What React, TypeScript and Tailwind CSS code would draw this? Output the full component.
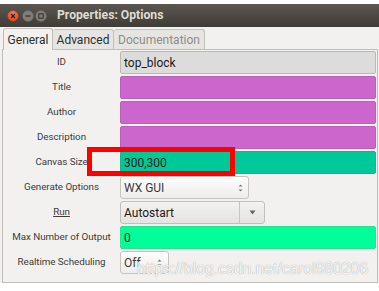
import React from "react";

function Spin() {
  return (
    <svg width="7" height="10" viewBox="0 0 7 10">
      <path d="M1.5 3.5 L3.5 1.5 L5.5 3.5 Z" fill="#777" />
      <path d="M1.5 6.5 L3.5 8.5 L5.5 6.5 Z" fill="#777" />
    </svg>
  );
}

const label = "flex items-center justify-center text-[9.8px] text-[#3c3c3c] tracking-[-0.05px]";
const fieldText = "text-[12px] text-[#1b1b1b] pl-[3px] flex items-center";

export default function App() {
  return (
    <div className="w-[379px] h-[291px] bg-white relative overflow-hidden font-['Roboto',sans-serif]">
      <div className="mt-[4px] h-[23px] bg-gradient-to-b from-[#5b5750] to-[#3e3c38] flex items-center pl-[7px]">
        <svg width="12" height="12" viewBox="0 0 12 12" className="mr-[3px]">
          <defs>
            <radialGradient id="cl" cx="0.5" cy="0.35" r="0.6">
              <stop offset="0" stopColor="#f5845a" />
              <stop offset="1" stopColor="#d9471d" />
            </radialGradient>
          </defs>
          <circle cx="6" cy="6" r="5.7" fill="url(#cl)" stroke="#5a2a1a" strokeWidth="0.4" />
          <path d="M4 4 L8 8 M8 4 L4 8" stroke="#3a1a10" strokeWidth="1.3" />
        </svg>
        <svg width="12" height="12" viewBox="0 0 12 12" className="mr-[1px]">
          <circle cx="6" cy="6" r="5.7" fill="#807d77" stroke="#4a4843" strokeWidth="0.4" />
          <path d="M3.5 6 L8.5 6" stroke="#3c3a36" strokeWidth="1.4" />
        </svg>
        <svg width="12" height="12" viewBox="0 0 12 12">
          <circle cx="6" cy="6" r="5.7" fill="#807d77" stroke="#4a4843" strokeWidth="0.4" />
          <rect x="3.8" y="3.8" width="4.4" height="4.4" fill="none" stroke="#3c3a36" strokeWidth="1.2" />
        </svg>
        <span className="ml-[10px] text-[12.2px] font-bold text-[#dfdbd2]">Properties: Options</span>
      </div>
      <div className="bg-[#f2f1f0] h-[256px] pl-[2px] pr-[1px]">
        <div className="h-[22px] flex items-end text-[12px] pl-[1px]">
          <div className="h-[22px] w-[50px] bg-[#f2f1f0] border border-b-0 border-[#bfbcb7] rounded-t-[3px] flex items-center justify-center text-[#2f2f2f] relative top-[1px]">General</div>
          <div className="h-[20px] w-[61px] bg-[#e7e5e2] border border-l-0 border-b-0 border-[#c4c1bc] rounded-t-[3px] flex items-center justify-center text-[#2f2f2f]">Advanced</div>
          <div className="h-[20px] w-[91px] bg-[#e7e5e2] border border-l-0 border-b-0 border-[#c4c1bc] rounded-t-[3px] flex items-center justify-center text-[#8e8c88]">Documentation</div>
        </div>
        <div className="h-[234px] border border-[#c2bfba] pt-[1px] pr-[1px] grid grid-cols-[117px_1fr] auto-rows-[23px] gap-y-[2px] content-start">
          <div className={label}>ID</div>
          <div className={`${fieldText} bg-[#dcdcdc] border border-[#bcb9b5] rounded-[2px]`}>top_block</div>

          <div className={label}>Title</div>
          <div className="bg-[#cc66cc] border border-[#b85fb8] rounded-[2px]" />

          <div className={label}>Author</div>
          <div className="bg-[#cc66cc] border border-[#b85fb8] rounded-[2px]" />

          <div className={label}>Description</div>
          <div className="bg-[#cc66cc] border border-[#b85fb8] rounded-[2px]" />

          <div className={label}>Canvas Size</div>
          <div className={`${fieldText} bg-[#00c999] border border-[#22b08a] rounded-[2px]`}>300,300</div>

          <div className={label}>Generate Options</div>
          <div className="flex">
            <div className="w-[129px] h-[23px] bg-gradient-to-b from-[#fdfdfd] to-[#ededec] border border-[#c7c4bf] rounded-[3px] flex items-center justify-between pr-[4px]">
              <span className="text-[12px] text-[#3a3a3a] pl-[3px]">WX GUI</span>
              <Spin />
            </div>
          </div>

          <div className={`${label}`}><span className="underline">Run</span></div>
          <div className="flex">
            <div className="w-[145px] h-[23px] bg-gradient-to-b from-[#f2f2f1] to-[#e4e3e1] border border-[#c2bfba] rounded-[3px] flex">
              <div className="flex-1 flex items-center text-[12px] text-[#1b1b1b] pl-[3px] border-r border-[#c8c5c0]">Autostart</div>
              <div className="w-[24px] flex items-center justify-center">
                <svg width="7" height="5" viewBox="0 0 7 5"><path d="M0.5 0.5 L6.5 0.5 L3.5 4.5 Z" fill="#666" /></svg>
              </div>
            </div>
          </div>

          <div className={label}>Max Number of Output</div>
          <div className={`${fieldText} bg-[#00ff99] border border-[#2de08e] rounded-[2px]`}>0</div>

          <div className={label}>Realtime Scheduling</div>
          <div className="flex">
            <div className="w-[49px] h-[23px] bg-gradient-to-b from-[#fdfdfd] to-[#ededec] border border-[#c7c4bf] rounded-[3px] flex items-center justify-between pr-[5px]">
              <span className="text-[12px] text-[#3a3a3a] pl-[3px]">Off</span>
              <Spin />
            </div>
          </div>
        </div>
      </div>

      <div className="absolute left-[87px] top-[147px] w-[148px] h-[29px] border-[5px] border-[#ff0000]" />

      <div className="absolute left-[137px] top-[259px] text-[15.7px] leading-[20px] font-['Liberation_Sans',sans-serif] text-white/90 [text-shadow:0_0_1px_#8a8a8a]">
        https://blog.csdn.net/carol980206
      </div>
    </div>
  );
}
